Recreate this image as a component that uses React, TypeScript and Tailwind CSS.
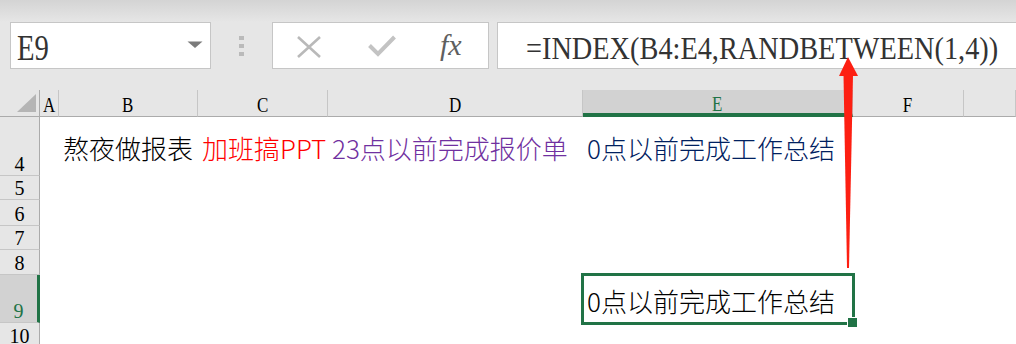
import React from "react";

const columns = [
  { label: "A" },
  { label: "B" },
  { label: "C" },
  { label: "D" },
  { label: "E", selected: true },
  { label: "F" },
  { label: "" },
];

const rows = [
  { n: "4" },
  { n: "5" },
  { n: "6" },
  { n: "7" },
  { n: "8" },
  { n: "9", selected: true },
  { n: "10" },
];

function XIcon() {
  return (
    <svg width="26" height="22" viewBox="0 0 26 22" className="shrink-0">
      <path d="M2 1 L24 21 M24 1 L2 21" stroke="#b9b9b9" strokeWidth="2.6" fill="none" />
    </svg>
  );
}

function CheckIcon() {
  return (
    <svg width="28" height="22" viewBox="0 0 28 22" className="shrink-0">
      <path d="M1.5 10.5 L10 19 L26.5 2" stroke="#c3c3c3" strokeWidth="4" fill="none" strokeLinejoin="miter" />
    </svg>
  );
}

function Cell({ color, children, selected }: { color: string; children?: React.ReactNode; selected?: boolean }) {
  return (
    <div
      className="relative bg-white flex items-center pl-[4px] pt-[3px] font-[family-name:Noto_Sans_CJK_SC,Noto_Sans,sans-serif] font-light text-[26px] leading-none whitespace-nowrap"
      style={{ color }}
    >
      {children}
      {selected && (
        <>
          <div className="absolute -inset-[2px] border-[3px] border-[#217346]" />
          <div className="absolute -right-[5px] -bottom-[5px] w-[11px] h-[11px] bg-[#217346] border border-white" />
        </>
      )}
    </div>
  );
}

export default function App() {
  return (
    <div className="relative w-[1016px] h-[344px] overflow-hidden bg-[#e6e6e6]">
      {/* ribbon shadow */}
      <div className="h-[22px] bg-linear-to-b from-[#d4d4d4] to-[#e6e6e6]" />

      {/* formula bar */}
      <div className="flex h-[47px]">
        <div className="relative shrink-0 ml-[10px] w-[201px] h-full bg-white border border-[#c6c6c6] flex items-center pl-[6px] pt-[6px]">
          <span className="inline-block origin-left scale-x-[0.82] font-[family-name:Liberation_Serif,serif] text-[35px] leading-none text-[#333]">E9</span>
          <svg width="16" height="8" viewBox="0 0 16 8" className="absolute left-[176px] top-[18px]">
            <path d="M0.5 0.5 L15.5 0.5 L8 7 Z" fill="#7b7b7b" />
          </svg>
        </div>
        <div className="shrink-0 w-[61px] flex flex-col gap-[4px] pl-[28px] pt-[14px]">
          <div className="w-[5px] h-[4px] bg-[#bababa]" />
          <div className="w-[5px] h-[4px] bg-[#bababa]" />
          <div className="w-[5px] h-[4px] bg-[#bababa]" />
        </div>
        <div className="shrink-0 w-[217px] h-full bg-white border border-[#c6c6c6] flex items-center">
          <div className="ml-[23px] mt-[2px]"><XIcon /></div>
          <div className="ml-[46px]"><CheckIcon /></div>
          <span className="ml-[44px] -mt-[2px] font-[family-name:Liberation_Serif,serif] italic text-[30px] leading-none text-[#5f5f5f]">fx</span>
        </div>
        <div className="ml-[8px] flex-1 min-w-0 -mr-[2px] h-full bg-white border border-r-0 border-[#c6c6c6] flex items-center pl-[28px] pt-[4px] whitespace-nowrap overflow-hidden">
          <span className="inline-block shrink-0 origin-left scale-x-[0.885] font-[family-name:Liberation_Serif,serif] text-[32px] leading-none text-[#333]">
            =INDEX(B4:E4,RANDBETWEEN(1,4))
          </span>
        </div>
      </div>

      {/* sheet */}
      <div className="mt-[21px] grid grid-cols-[40px_19px_139px_130px_255px_270px_111px_1fr] grid-rows-[27px_59px_24px_26px_24px_25px_48px_25px]">
        {/* select all */}
        <div className="relative border-r border-b border-[#ababab] bg-[#e6e6e6]">
          <svg width="20" height="19" viewBox="0 0 20 19" className="absolute left-[17px] top-[4px]">
            <path d="M19 0 L19 18 L0 18 Z" fill="#b5b5b5" />
          </svg>
        </div>
        {columns.map((c, i) =>
          c.selected ? (
            <div key={i} className="flex items-center justify-center bg-[#d2d2d2] border-b-[4px] border-[#217346] border-r border-r-[#c6c6c6] pt-[4px]">
              <span className="inline-block scale-x-[0.85] font-[family-name:Liberation_Serif,serif] text-[20px] leading-none text-[#217346]">{c.label}</span>
            </div>
          ) : (
            <div key={i} className="flex items-center justify-center border-b border-b-[#ababab] border-r border-r-[#c6c6c6] pt-[3px]">
              <span className="inline-block scale-x-[0.85] font-[family-name:Liberation_Serif,serif] text-[20px] leading-none text-black">{c.label}</span>
            </div>
          )
        )}

        {rows.map((r) => (
          <React.Fragment key={r.n}>
            {r.selected ? (
              <div className="flex items-end justify-center bg-[#d2d2d2] border-r-[3px] border-r-[#217346] border-b border-b-[#c6c6c6] pb-[1px]">
                <span className="font-[family-name:Liberation_Serif,serif] text-[20px] leading-none text-[#217346]">{r.n}</span>
              </div>
            ) : (
              <div className="flex items-end justify-center border-r border-r-[#ababab] border-b border-b-[#c6c6c6] pb-[1px]">
                <span className="font-[family-name:Liberation_Serif,serif] text-[20px] leading-none text-black">{r.n}</span>
              </div>
            )}
            {r.n === "4" ? (
              <>
                <div className="bg-white" />
                <Cell color="#000000">熬夜做报表</Cell>
                <Cell color="#ff0000">加班搞PPT</Cell>
                <Cell color="#7030a0">23点以前完成报价单</Cell>
                <Cell color="#002060">0点以前完成工作总结</Cell>
                <div className="bg-white" />
                <div className="bg-white" />
              </>
            ) : r.n === "9" ? (
              <>
                <div className="bg-white" />
                <div className="bg-white" />
                <div className="bg-white" />
                <div className="bg-white" />
                <Cell color="#000000" selected>0点以前完成工作总结</Cell>
                <div className="bg-white" />
                <div className="bg-white" />
              </>
            ) : (
              <>
                {columns.map((c) => (
                  <div key={c.label + r.n} className="bg-white" />
                ))}
              </>
            )}
          </React.Fragment>
        ))}
      </div>

      {/* red arrow annotation */}
      <svg width="1016" height="344" viewBox="0 0 1016 344" className="absolute inset-0 pointer-events-none">
        <path d="M848 57 L839 76 L858 76 Z" fill="#fd1f12" />
        <path d="M843.5 75 L853 75 L849 268 L847 268 Z" fill="#fd1f12" />
      </svg>
    </div>
  );
}
